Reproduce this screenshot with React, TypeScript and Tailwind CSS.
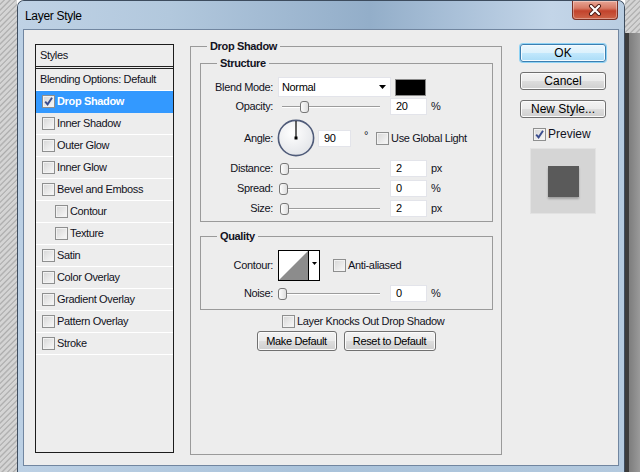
import React from 'react';

type StyleRow = { label: string; checked?: boolean; active?: boolean; indent?: boolean };

const styleRows: StyleRow[] = [
  { label: 'Drop Shadow', checked: true, active: true },
  { label: 'Inner Shadow' },
  { label: 'Outer Glow' },
  { label: 'Inner Glow' },
  { label: 'Bevel and Emboss' },
  { label: 'Contour', indent: true },
  { label: 'Texture', indent: true },
  { label: 'Satin' },
  { label: 'Color Overlay' },
  { label: 'Gradient Overlay' },
  { label: 'Pattern Overlay' },
  { label: 'Stroke' },
];

function Check({ on = false }: { on?: boolean }) {
  return (
    <span className="inline-flex h-[13px] w-[13px] shrink-0 items-center justify-center border border-[#8e8f8f] bg-[linear-gradient(135deg,#d6d6d6,#f9f9f9)] shadow-[inset_0_0_0_1px_#f2f2f2]">
      {on && (
        <svg viewBox="0 0 11 11" className="h-[11px] w-[11px]">
          <path d="M2.2 5.6 L4.6 8.4 L9 1.8" fill="none" stroke="#3a4d8f" strokeWidth="1.9" />
        </svg>
      )}
    </span>
  );
}

function Slider({ at }: { at: number }) {
  return (
    <div className="relative h-[14px] w-[107px] shrink-0">
      <div className="absolute left-[4px] right-[5px] top-[6px] h-[2px] border-t border-b border-t-[#9c9c9c] border-b-white" />
      <svg viewBox="0 0 9 12" className="absolute top-[1px] h-[12px] w-[9px]" style={{ left: at }}>
        <defs>
          <linearGradient id="thumb" x1="0" y1="0" x2="1" y2="0">
            <stop offset="0" stopColor="#ffffff" />
            <stop offset="1" stopColor="#dcdcdc" />
          </linearGradient>
        </defs>
        <rect x="0.5" y="0.5" width="8" height="11" rx="2.5" fill="url(#thumb)" stroke="#777" />
      </svg>
    </div>
  );
}

function NumBox({ value, w = 'w-[37px]' }: { value: string; w?: string }) {
  return (
    <div className={`${w} flex h-[17px] shrink-0 items-center border border-[#e3e4ea] bg-white pl-[5px] text-black`}>
      {value}
    </div>
  );
}

function Label({ text }: { text: string }) {
  return <span className="w-[72px] shrink-0 text-right">{text}</span>;
}

function SliderRow({ label, at, value, unit, className = '' }: { label: string; at: number; value: string; unit: string; className?: string }) {
  return (
    <div className={`flex h-[17px] items-center ${className}`}>
      <Label text={label} />
      <div className="ml-[5px] flex items-center">
        <Slider at={at} />
        <div className="ml-[5px]">
          <NumBox value={value} />
        </div>
        <span className="ml-[4px]">{unit}</span>
      </div>
    </div>
  );
}

const plainBtn =
  'flex items-center justify-center rounded-[3px] border border-[#707070] bg-[linear-gradient(#f3f3f3_0%,#ebebeb_48%,#dddddd_52%,#cfcfcf_100%)] shadow-[inset_0_0_0_1px_#fbfbfb] text-black';

function Dial() {
  return (
    <svg viewBox="0 0 38 38" className="h-[38px] w-[38px] shrink-0">
      <defs>
        <radialGradient id="dial" cx="0.4" cy="0.35" r="0.7">
          <stop offset="0" stopColor="#ffffff" />
          <stop offset="1" stopColor="#e2e4e8" />
        </radialGradient>
      </defs>
      <circle cx="19" cy="19" r="17.6" fill="url(#dial)" stroke="#4f5b79" strokeWidth="1.6" />
      <line x1="19" y1="19" x2="19" y2="2" stroke="#000" strokeWidth="1.2" />
      <rect x="17.5" y="17.5" width="3" height="3" fill="#000" />
    </svg>
  );
}

export default function App() {
  return (
    <div className="flex h-[472px] w-[640px] overflow-hidden font-['Liberation_Sans',Arial,sans-serif] text-[11px] leading-[13px] tracking-[-0.35px] text-[#121222]">
      {/* desktop on the left */}
      <div className="w-[17px] shrink-0 bg-[repeating-linear-gradient(135deg,#d4d4d4_0px,#d4d4d4_2px,#adadad_3px,#c4c4c4_4px)]" />

      {/* dialog window */}
      <div className="flex w-[608px] shrink-0 flex-col rounded-t-[7px] border border-b-0 border-[#3d4c5e] bg-[linear-gradient(90deg,#bcd0e4,#a9c2da_50%,#b3c9de)]">
        <div className="flex h-[28px] shrink-0 items-start justify-between rounded-t-[6px] bg-[linear-gradient(90deg,#bfd2e5_0%,#b2c8dd_25%,#9fb8d1_45%,#93aec9_58%,#a9c0d8_72%,#c3d5e8_88%,#b9cde1_100%)]">
          <span className="pl-[7px] pt-[8px] text-[12px] leading-[14px] tracking-[-0.3px] text-black">Layer Style</span>
          <div className="mr-[6px] flex h-[19px] w-[46px] items-center justify-center rounded-b-[4px] border border-t-0 border-[#7a3125] bg-[linear-gradient(#e8a594_0%,#d77a65_40%,#c2432c_55%,#cd6448_100%)] shadow-[inset_0_0_0_1px_rgba(255,255,255,0.35)]">
            <svg viewBox="0 0 14 12" className="h-[12px] w-[14px]">
              <path d="M3 2 L11 10 M11 2 L3 10" stroke="#4a1a14" strokeWidth="4" strokeLinecap="round" />
              <path d="M3 2 L11 10 M11 2 L3 10" stroke="#fff" strokeWidth="2.2" strokeLinecap="round" />
            </svg>
          </div>
        </div>

        <div className="flex min-h-0 flex-1 px-[5px] pb-[6px]">
          <div className="flex h-[437px] w-[596px] items-start border border-[#7186a0] bg-[#ededed]">
            {/* styles list */}
            <div className="ml-[11px] mt-[14px] flex h-[409px] w-[139px] shrink-0 flex-col border border-[#1c1c1c]">
              <div className="flex h-[24px] shrink-0 items-center border-b-[3px] border-double border-[#222] pl-[4px]">Styles</div>
              <div className="flex h-[22px] shrink-0 items-center border-b border-white pl-[4px]">Blending Options: Default</div>
              {styleRows.map((r) => (
                <div
                  key={r.label}
                  className={`flex h-[22px] shrink-0 items-center gap-[1px] border-b ${
                    r.active ? 'border-[#3399ff] bg-[#3399ff] font-bold text-white' : 'border-white'
                  } ${r.indent ? 'pl-[19px]' : 'pl-[6px]'}`}
                >
                  <Check on={r.checked} />
                  <span className="ml-[1px]">{r.label}</span>
                </div>
              ))}
            </div>

            {/* drop shadow settings */}
            <fieldset className="ml-[16px] mt-[10px] h-[415px] w-[312px] shrink-0 border border-[#9a9a9a]">
              <legend className="ml-[16px] px-[3px] font-bold">Drop Shadow</legend>

              <fieldset className="ml-[9px] mt-[4px] w-[293px] border border-[#9a9a9a] pb-[4px]">
                <legend className="ml-[16px] px-[3px] font-bold">Structure</legend>

                <div className="mt-[7px] flex h-[20px] items-center">
                  <Label text="Blend Mode:" />
                  <div className="ml-[5px] flex h-[20px] w-[113px] items-center justify-between border border-[#e3e4ea] bg-white pl-[3px] pr-[4px] text-black">
                    <span>Normal</span>
                    <svg viewBox="0 0 7 4" className="h-[4px] w-[7px]">
                      <path d="M0 0 H7 L3.5 4Z" fill="#000" />
                    </svg>
                  </div>
                  <div className="ml-[4px] h-[17px] w-[31px] border border-[#8a8a8a] bg-black" />
                </div>

                <SliderRow label="Opacity:" at={22} value="20" unit="%" className="mt-[1px]" />

                <div className="mt-[4px] flex h-[38px] items-center">
                  <Label text="Angle:" />
                  <div className="ml-[4px] flex items-center">
                    <Dial />
                    <div className="ml-[3px]">
                      <NumBox value="90" w="w-[33px]" />
                    </div>
                    <span className="ml-[13px] -mt-[6px]">°</span>
                    <div className="ml-[8px] flex items-center gap-[2px]">
                      <Check />
                      <span>Use Global Light</span>
                    </div>
                  </div>
                </div>

                <SliderRow label="Distance:" at={2} value="2" unit="px" className="mt-[3px]" />
                <SliderRow label="Spread:" at={1} value="0" unit="%" className="mt-[3px]" />
                <SliderRow label="Size:" at={2} value="2" unit="px" className="mt-[3px]" />
              </fieldset>

              <fieldset className="ml-[9px] mt-[8px] w-[293px] border border-[#9a9a9a] pb-[7px]">
                <legend className="ml-[16px] px-[3px] font-bold">Quality</legend>

                <div className="mt-[7px] flex h-[31px] items-center">
                  <Label text="Contour:" />
                  <div className="ml-[5px] flex h-[31px] w-[42px] border border-black bg-white">
                    <svg viewBox="0 0 29 29" className="h-[29px] w-[29px]" preserveAspectRatio="none">
                      <path d="M0 29 L29 0 V29Z" fill="#8c8c8c" />
                    </svg>
                    <div className="flex w-[11px] justify-center border-l border-black pt-[11px]">
                      <svg viewBox="0 0 5 3" className="h-[3px] w-[5px]">
                        <path d="M0 0 H5 L2.5 3Z" fill="#000" />
                      </svg>
                    </div>
                  </div>
                  <div className="ml-[13px] flex items-center gap-[2px]">
                    <Check />
                    <span>Anti-aliased</span>
                  </div>
                </div>

                <SliderRow label="Noise:" at={0} value="0" unit="%" className="mt-[4px]" />
              </fieldset>

              <div className="ml-[91px] mt-[5px] flex items-center gap-[2px]">
                <Check />
                <span>Layer Knocks Out Drop Shadow</span>
              </div>

              <div className="mt-[3px] flex justify-center gap-[7px]">
                <div className={`${plainBtn} h-[20px] w-[80px]`}>Make Default</div>
                <div className={`${plainBtn} h-[20px] w-[92px]`}>Reset to Default</div>
              </div>
            </fieldset>

            {/* dialog buttons and preview */}
            <div className="ml-[18px] mt-[14px] flex w-[86px] shrink-0 flex-col text-[12px] tracking-normal">
              <div className="flex h-[18px] items-center justify-center rounded-[3px] border border-[#3c7fb1] bg-[linear-gradient(#ecf7fd_0%,#dcf1fc_48%,#c1e7fc_52%,#aadcf7_100%)] shadow-[0_0_0_1px_#8fd3f5,inset_0_0_0_1px_#f4fbff] text-black">
                OK
              </div>
              <div className={`${plainBtn} mt-[10px] h-[18px]`}>Cancel</div>
              <div className={`${plainBtn} mt-[10px] h-[18px]`}>New Style...</div>
              <div className="ml-[13px] mt-[10px] flex items-center gap-[2px]">
                <Check on />
                <span>Preview</span>
              </div>
              <div className="ml-[10px] mt-[7px] flex h-[66px] w-[66px] items-center justify-center border border-[#e2e2e2] bg-[#d5d5d5]">
                <div className="h-[31px] w-[31px] bg-[#5a5a5a] shadow-[0_2px_2px_rgba(0,0,0,0.25)]" />
              </div>
            </div>
          </div>
        </div>
      </div>

      {/* desktop and panels on the right */}
      <div className="flex flex-1 flex-col">
        <div className="h-[33px] shrink-0 bg-[repeating-linear-gradient(135deg,#d4d4d4_0px,#d4d4d4_2px,#adadad_3px,#c4c4c4_4px)]" />
        <div className="flex flex-1">
          <div className="w-[4px] bg-[#3b3b3b]" />
          <div className="flex-1 bg-[linear-gradient(90deg,#7d7d7d,#9a9a9a)]" />
        </div>
      </div>
    </div>
  );
}
